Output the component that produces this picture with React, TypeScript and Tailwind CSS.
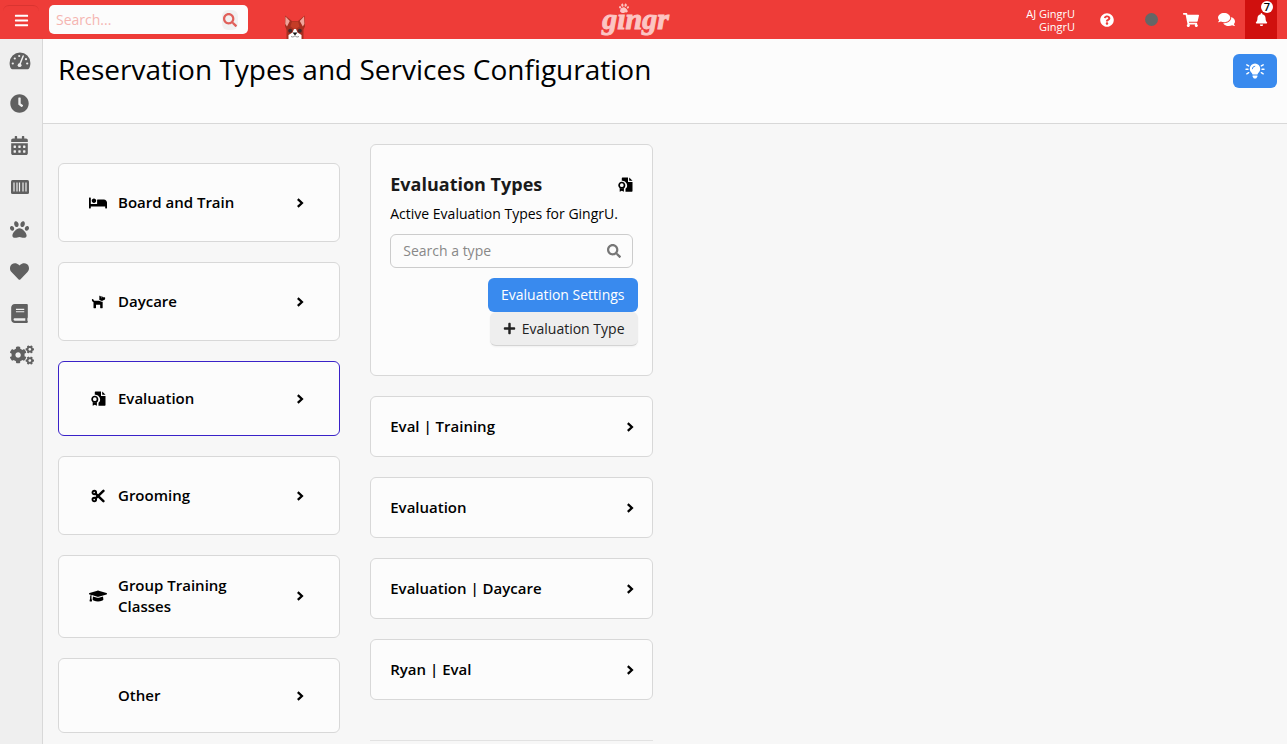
import type { ReactNode } from "react";
import {
  FaBars,
  FaBed,
  FaBell,
  FaBook,
  FaCalendarAlt,
  FaClock,
  FaCogs,
  FaComments,
  FaDog,
  FaGraduationCap,
  FaHeart,
  FaPaw,
  FaPlus,
  FaQuestionCircle,
  FaSearch,
  FaShoppingCart,
} from "react-icons/fa";

function GaugeIcon() {
  return (
    <svg viewBox="0 0 22 18" className="h-[18px] w-[22px]" aria-hidden="true">
      <path
        d="M11 .5A10.400 10.400 0 0 0 .6 10.900c0 2.100.5 4 1.400 5.700.3.500.7.700 1.200.700h15.600c.5 0 .9-.2 1.200-.7.900-1.700 1.400-3.600 1.400-5.700A10.400 10.400 0 0 0 11 .5Z"
        fill="currentColor"
      />
      <g fill="#efefef">
        <circle cx="3.800" cy="11.500" r="1.100" />
        <circle cx="5.800" cy="6.500" r="1.100" />
        <circle cx="10.200" cy="4" r="1.100" />
        <circle cx="17" cy="7.200" r="1.100" />
        <circle cx="18.200" cy="11.500" r="1.100" />
        <circle cx="10.600" cy="13.200" r="1.900" />
      </g>
      <path d="M10.800 12.500 14.200 4" stroke="#efefef" strokeWidth="1.500" strokeLinecap="round" />
    </svg>
  );
}

function BarcodeIcon() {
  return (
    <svg viewBox="0 0 18 14" className="h-[14px] w-[18px]" aria-hidden="true">
      <rect width="18" height="14" rx="1.500" fill="currentColor" />
      <path d="M3 2.500v9M6 2.500v9M8.500 2.500v9M12 2.500v9M15 2.500v9" stroke="#efefef" strokeWidth="1.200" />
    </svg>
  );
}

function CertificateIcon() {
  return (
    <svg viewBox="0 0 15 15" className="h-[15px] w-[15px]" aria-hidden="true">
      <path d="M4.500.5h5.500V5h4.500v9a.7.700 0 0 1-.7.700H7.500V11.800A4.600 4.600 0 0 0 3.800 3.800V1.200c0-.4.300-.7.700-.7Z" fill="currentColor" />
      <path d="M11.200.5v3.300h3.300Z" fill="currentColor" />
      <circle cx="3.800" cy="8.200" r="2.700" fill="none" stroke="currentColor" strokeWidth="1.700" />
      <path d="M1.700 11v3.800L3.800 13.800 5.900 14.800v-3.800L3.800 11.600Z" fill="currentColor" />
    </svg>
  );
}

function ScissorsIcon() {
  return (
    <svg viewBox="0 0 14 14" className="h-[14px] w-[14px]" fill="none" stroke="currentColor" aria-hidden="true">
      <circle cx="3.300" cy="3.500" r="1.800" strokeWidth="1.900" />
      <circle cx="3.300" cy="10.500" r="1.800" strokeWidth="1.900" />
      <path d="M4.600 9.300 12.400 1.900M4.600 4.700l7.800 7.400" strokeWidth="2.500" strokeLinecap="round" />
    </svg>
  );
}

function ChevronIcon() {
  return (
    <svg viewBox="0 0 8 10" className="h-[10px] w-2" fill="none" stroke="currentColor" aria-hidden="true">
      <path d="M1.800 1.200 5.900 5 1.800 8.800" strokeWidth="2.300" />
    </svg>
  );
}

function BulbIcon() {
  return (
    <svg viewBox="0 0 20 16" className="h-4 w-5" aria-hidden="true">
      <path
        d="M10 .6a5.200 5.200 0 0 0-5.200 5.200c0 1.400.5 2.500 1.300 3.400.7.700 1.200 1.500 1.400 2.300h5c.2-.8.700-1.600 1.400-2.300.8-.9 1.300-2 1.300-3.400A5.200 5.200 0 0 0 10 .6ZM7.600 12.400v1.300L8.900 15.600h2.200l1.300-1.900v-1.300Z"
        fill="currentColor"
      />
      <path d="M7.300 5.800A2.600 2.600 0 0 1 9.800 3.200" fill="none" stroke="#398aee" strokeWidth=".9" strokeLinecap="round" />
      <path
        d="M1 6.300h2M17 6.300h2M1.800 1.800l1.900 1.100M18.200 1.800l-1.900 1.100M1.800 10.800l1.900-1.100M18.200 10.800l-1.900-1.100"
        stroke="currentColor"
        strokeWidth="1.400"
        strokeLinecap="round"
      />
    </svg>
  );
}

function FoxIcon() {
  return (
    <svg viewBox="0 0 22 24" className="h-6 w-[22px]" aria-hidden="true">
      <path d="M1 .5 8 6h6l6.500-5.500.5 11-1.500 3V24h-17v-9L1 11Z" fill="#a72f20" />
      <path d="M1.500 1.500 5.800 6 3 11.500 1.300 9ZM20 1.500 15.800 6l3 5.500 1.600-2.500Z" fill="#f0a49b" />
      <path d="M8 6.500h6l1.500 5-4.500 3-4.500-3Z" fill="#c43d27" />
      <path d="M10 14h2l1.500 3.500 4 2.500v4h-13v-4l4-2.500Z" fill="#fff" />
      <circle cx="6.200" cy="15.800" r="2" fill="#44292a" />
      <circle cx="15.800" cy="15.800" r="2" fill="#44292a" />
      <path d="M8.500 17.500h5L11 20.500Z" fill="#151515" />
      <path d="M7 21.500q2 1.500 4-.7 2 2.200 4 .7" fill="none" stroke="#777" strokeWidth=".8" />
    </svg>
  );
}

const sideLinks: { label: string; icon: ReactNode }[] = [
  { label: "Dashboard", icon: <GaugeIcon /> },
  { label: "Time clock", icon: <FaClock size={19} /> },
  { label: "Calendar", icon: <FaCalendarAlt size={19} /> },
  { label: "Retail", icon: <BarcodeIcon /> },
  { label: "Animals", icon: <FaPaw size={19} /> },
  { label: "Favorites", icon: <FaHeart size={19} /> },
  { label: "Reports", icon: <FaBook size={19} /> },
];

const services: { name: string; icon?: ReactNode; size: string; active?: boolean }[] = [
  { name: "Board and Train", icon: <FaBed size={18} />, size: "py-7" },
  { name: "Daycare", icon: <FaDog size={15} />, size: "py-7" },
  { name: "Evaluation", icon: <CertificateIcon />, size: "py-[26px]", active: true },
  { name: "Grooming", icon: <ScissorsIcon />, size: "py-7" },
  { name: "Group Training Classes", icon: <FaGraduationCap size={18} />, size: "pt-[19px] pb-5" },
  { name: "Other", size: "py-[26px]" },
];

const evaluationTypes = ["Eval | Training", "Evaluation", "Evaluation | Daycare", "Ryan | Eval"];

function TopBar() {
  return (
    <header className="grid h-[39px] grid-cols-[1fr_auto_1fr] items-center bg-[#ee3c38] text-white">
      <div className="flex h-full items-center">
        <button
          type="button"
          aria-label="Menu"
          className="ml-[3px] flex h-[29px] w-9 items-center justify-center rounded-md border-t border-[#d93430]"
        >
          <FaBars size={15} />
        </button>
        <form role="search" className="ml-[10px] flex h-[29px] w-[199px] items-center rounded-[5px] bg-[#fcfcfc] pr-[10px] pl-[7px]">
          <input
            type="text"
            aria-label="Search"
            placeholder="Search..."
            className="min-w-0 flex-1 text-sm text-black outline-none placeholder:text-[#f5b5b1]"
          />
          <button type="button" aria-label="Submit search" className="flex h-5 w-4 items-center justify-center rounded-md bg-[#f1f1f1] text-[#e0605a]">
            <FaSearch size={14} />
          </button>
        </form>
        <div className="ml-9 self-end">
          <FoxIcon />
        </div>
      </div>

      <a
        href="#home"
        className="relative mr-4 h-[39px] px-px font-['Liberation_Serif',serif] text-[30px] leading-[37px] font-bold text-[#fcc5c3] italic [-webkit-text-stroke:1px_#fcc5c3]"
      >
        gingr
        <FaPaw size={10} className="absolute top-[3px] left-[18px]" />
      </a>

      <div className="flex h-full items-center justify-end">
        <div className="text-right text-[11px] leading-[13px]">
          <div>AJ GingrU</div>
          <div>GingrU</div>
        </div>
        <button type="button" aria-label="Help" className="ml-[25px]">
          <FaQuestionCircle size={14} />
        </button>
        <span className="ml-[31px] h-[13px] w-[13px] rounded-full bg-[#666]" />
        <button type="button" aria-label="Cart" className="ml-[25px]">
          <FaShoppingCart size={16} />
        </button>
        <button type="button" aria-label="Messages" className="ml-[19px]">
          <FaComments size={17} />
        </button>
        <button
          type="button"
          aria-label="Notifications"
          className="relative mr-[10px] ml-[10px] flex h-full w-8 items-center justify-center bg-[#d0100e]"
        >
          <FaBell size={13} />
          <span className="absolute top-px right-1 h-3 w-3 rounded-full bg-white text-center text-[11px] leading-3 font-semibold text-black">
            7
          </span>
        </button>
      </div>
    </header>
  );
}

function SideNav() {
  return (
    <nav className="w-[43px] shrink-0 border-r border-[#d8d8d8] bg-[#efefef] pt-px text-[#606060]">
      {sideLinks.map((link) => (
        <a key={link.label} href="#nav" aria-label={link.label} className="flex h-[42px] w-[39px] items-center justify-center">
          {link.icon}
        </a>
      ))}
      <a href="#settings" aria-label="Settings" className="flex h-[42px] w-[43px] items-center justify-center">
        <FaCogs size={24} />
      </a>
    </nav>
  );
}

function EvaluationPanel() {
  return (
    <section className="rounded-md border border-[#d8d8d8] bg-[#fcfcfc] px-[19px] pt-[26px] pb-[29px]">
      <div className="flex items-center justify-between">
        <h2 className="text-lg leading-[26px] font-bold text-[#1a1a1a]">Evaluation Types</h2>
        <CertificateIcon />
      </div>
      <p className="mt-[7px] text-sm leading-5">Active Evaluation Types for GingrU.</p>
      <div className="mt-[10px] flex h-[34px] items-center rounded-md border border-[#ccc] pr-[11px] pl-3">
        <input
          type="text"
          aria-label="Search a type"
          placeholder="Search a type"
          className="min-w-0 flex-1 text-sm outline-none placeholder:text-[#888]"
        />
        <FaSearch size={14} className="text-[#777]" />
      </div>
      <div className="-mr-[5px] mt-[10px] flex flex-col items-end">
        <button type="button" className="h-[34px] rounded-md bg-[#398aee] px-[13px] text-sm text-white">
          Evaluation Settings
        </button>
        <button
          type="button"
          className="flex h-[34px] items-center gap-[6px] rounded-md border-b border-[#d4d4d4] bg-[#eee] px-[13px] text-sm text-[#222] shadow-xs"
        >
          <FaPlus size={13} />
          Evaluation Type
        </button>
      </div>
    </section>
  );
}

export default function App() {
  return (
    <div className="flex h-screen flex-col overflow-hidden bg-[#f7f7f7] font-['Open_Sans',sans-serif] text-black">
      <TopBar />
      <div className="flex min-h-0 flex-1">
        <SideNav />
        <main className="min-w-0 flex-1">
          <div className="flex h-[85px] items-start justify-between border-b border-[#d8d8d8] bg-[#fcfcfc] pr-[10px] pl-[15px]">
            <h1 className="pt-[10px] text-[28px] leading-10">Reservation Types and Services Configuration</h1>
            <button
              type="button"
              aria-label="Tips"
              className="mt-[15px] flex h-[34px] w-11 items-center justify-center rounded-md bg-[#398aee] text-white"
            >
              <BulbIcon />
            </button>
          </div>

          <div className="grid grid-cols-4 items-start gap-[30px] pt-5 pr-[10px] pl-[15px]">
            <div className="flex flex-col gap-5 pt-[19px]">
              {services.map((s) => (
                <a
                  key={s.name}
                  href="#service"
                  className={`flex items-center rounded-md border bg-[#fcfcfc] pr-[35px] pl-[30px] ${s.size} ${
                    s.active ? "border-[#3a22c8]" : "border-[#d8d8d8]"
                  }`}
                >
                  <span className="flex w-[18px] shrink-0 justify-center">{s.icon}</span>
                  <span className="ml-[11px] flex-1 pr-9 text-[15px] leading-[21px] font-semibold">{s.name}</span>
                  <ChevronIcon />
                </a>
              ))}
            </div>

            <div className="flex flex-col gap-5">
              <EvaluationPanel />
              {evaluationTypes.map((name) => (
                <a
                  key={name}
                  href="#type"
                  className="flex h-[61px] items-center justify-between rounded-md border border-[#d8d8d8] bg-[#fcfcfc] pr-[18px] pl-[19px]"
                >
                  <span className="text-[15px] leading-[21px] font-semibold">{name}</span>
                  <ChevronIcon />
                </a>
              ))}
              <hr className="mt-5 border-[#e2e2e2]" />
            </div>
          </div>
        </main>
      </div>
    </div>
  );
}
